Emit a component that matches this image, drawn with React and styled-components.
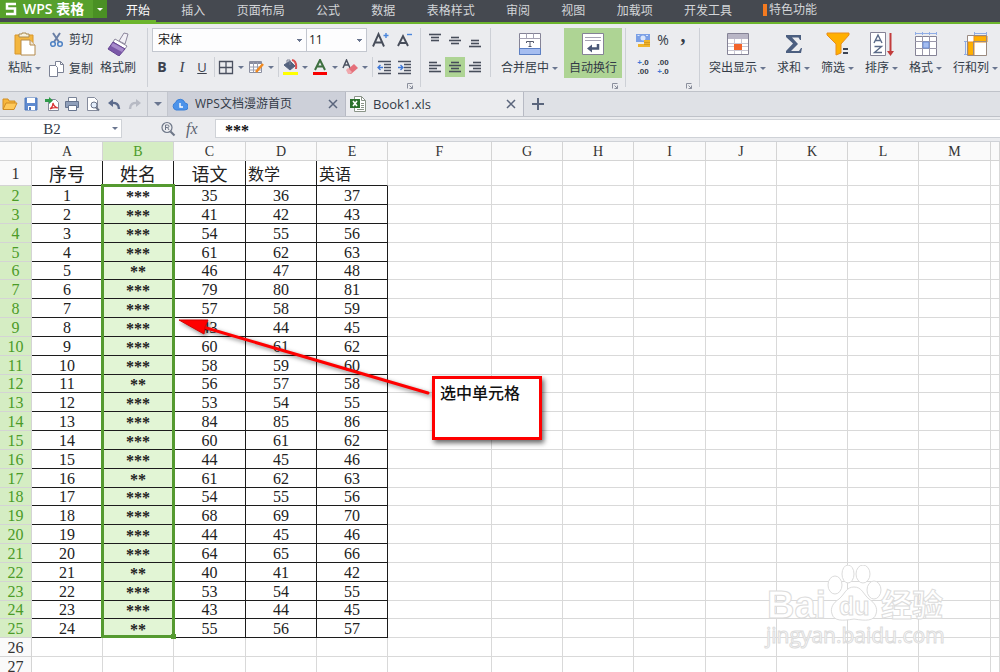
import React from "react";
import styled, { createGlobalStyle } from "styled-components";

const ui = `"Open Sans", "Noto Sans CJK SC", sans-serif`;
const song = `"Liberation Serif", "Noto Sans CJK SC", serif`;

const menus = ["插入", "页面布局", "公式", "数据", "表格样式", "审阅", "视图", "加载项", "开发工具"];

// the last column takes whatever width is left
const columns = [
  ["A", 71], ["B", 71], ["C", 72], ["D", 71], ["E", 71], ["F", 104], ["G", 71],
  ["H", 71], ["I", 72], ["J", 71], ["K", 71], ["L", 71], ["M", 72], ["", null],
];

const heads = ["序号", "姓名", "语文", "数学", "英语"];
const chinese = [35, 41, 54, 61, 46, 79, 57, 43, 60, 58, 56, 53, 84, 60, 44, 61, 54, 68, 44, 64, 40, 53, 43, 55];
const shortNames = [5, 11, 16, 21, 24];

const rows = chinese.map((score, i) => [
  i + 1,
  shortNames.includes(i + 1) ? "**" : "***",
  score,
  score + 1,
  score + 2,
]);
const blankRows = [26, 27];

/* ---------- icons ---------- */

const Svg = ({ w = 16, h = 16, children }) => (
  <svg width={w} height={h} viewBox={`0 0 ${w} ${h}`} fill="none" aria-hidden="true">
    {children}
  </svg>
);

const PasteIcon = () => (
  <Svg w={24} h={24}>
    <path d="M2 3h18v19H2z" fill="#f3b63f" stroke="#d8962a" />
    <path d="M6 5V2h3V1h4v1h3v3z" fill="#f6f0dc" stroke="#a98b52" />
    <path d="M8 8h9l5 5v10H8z" fill="#fff" stroke="#b48a4c" />
    <path d="M17 8v5h5" fill="#efe6d4" stroke="#b48a4c" />
  </Svg>
);
const CutIcon = () => (
  <Svg>
    <path d="M4 1l6 9M11 1L5 10" stroke="#6a7fa5" strokeWidth="2" />
    <circle cx="4" cy="12" r="2.3" stroke="#4e82c4" strokeWidth="1.5" />
    <circle cx="11" cy="12" r="2.3" stroke="#4e82c4" strokeWidth="1.5" />
  </Svg>
);
const CopyIcon = () => (
  <Svg>
    <path d="M6.5 .5h5l3 3v8h-8z" fill="#fff" stroke="#7c8295" />
    <path d="M11.5 .5v3h3" stroke="#7c8295" />
    <path d="M.5 4.5h6l2 2v9h-8z" fill="#fff" stroke="#7c8295" />
  </Svg>
);
const BrushIcon = () => (
  <Svg w={24} h={24}>
    <path d="M13 9l5-8 4 1-3 10z" fill="#f2f0f6" stroke="#8c869c" />
    <path d="M9 7l12 7-2 3L7 10z" fill="#fff" stroke="#8c869c" />
    <path d="M7 10l12 7-6 7-11-7z" fill="#7b58a8" stroke="#674694" />
    <path d="M7 11l11 6-2 3-11-6z" fill="#a78bcb" />
  </Svg>
);
const MergeIcon = () => (
  <Svg w={24} h={24}>
    <path d="M1.5 1.5h21v21h-21z" fill="#fff" stroke="#858396" />
    <path d="M1.5 6.500h21M8.5 1.5v5M15.5 1.5v5" stroke="#a5a3b3" />
    <path d="M2 16h20v6H2z" fill="#a5bdf0" />
    <path d="M1.5 16.5h21v6h-21z" stroke="#5b7fc4" />
    <path d="M8.5 11V9.5h7V11M12 9.5v5M10.5 14.5h3" stroke="#555b6c" />
  </Svg>
);
const WrapIcon = () => (
  <Svg w={24} h={24}>
    <path d="M1.5 1.5h21v21h-21z" fill="#fff" stroke="#858396" />
    <path d="M4 5.5h16M4 8.5h16" stroke="#a5a3b3" />
    <path d="M17 12v4.500H9" stroke="#4a5776" strokeWidth="2.500" />
    <path d="M6 16.500l5-4v8z" fill="#4a5776" />
  </Svg>
);
const HighlightIcon = () => (
  <Svg w={24} h={24}>
    <path d="M1.5 1.5h21v21h-21z" fill="#fff" stroke="#858396" />
    <path d="M2 2h20v5H2z" fill="#b9b6c6" />
    <path d="M2 11.5h20M2 14.5h20M2 18.5h20M8.5 7v15M15.5 7v15" stroke="#c9c7d3" />
    <path d="M8 12h8v6H8z" fill="#f2642a" />
  </Svg>
);
const SumIcon = () => (
  <Svg w={24} h={24}>
    <path d="M4 3h15v5h-1l-1.500-2.500H10l6 6.500-7 7h8l2-3h1l-1 5H4v-2l7-7.500L4 5z" fill="#4c5f80" />
  </Svg>
);
const FilterIcon = () => (
  <Svg w={24} h={24}>
    <path d="M1 1h22v2l-8 9v9l-5 2V12L1 3z" fill="#ffb000" stroke="#e88d1c" />
    <path d="M17 17h5M17 21h5" stroke="#3d4454" strokeWidth="2" />
  </Svg>
);
const SortIcon = () => (
  <Svg w={24} h={24}>
    <path d="M.5 .5h15v23H.5z" fill="#fff" stroke="#858396" />
    <path d="M4 11l4-8 4 8M5.500 8.500h5M4.500 14.500h7l-7 6h7.500" stroke="#5a6a88" strokeWidth="1.400" />
    <path d="M20.500 1v20" stroke="#c23c3c" strokeWidth="2" />
    <path d="M17 19h7l-3.500 5z" fill="#c23c3c" />
  </Svg>
);
const FormatIcon = () => (
  <Svg w={24} h={24}>
    <path d="M1.5 4.5h21v19h-21z" fill="#fff" stroke="#858396" />
    <path d="M1 9.5h22M1 16.5h22M8.5 4v19M15.5 4v19" stroke="#9a98aa" />
    <path d="M9 10h6v6H9z" fill="#a5bdf0" stroke="#6b8dd6" />
    <path d="M1 1.5h22M1.5 0v3M8.5 0v3M15.5 0v3M22.5 0v3" stroke="#8fade6" />
  </Svg>
);
const RowColIcon = () => (
  <Svg w={24} h={24}>
    <path d="M4 4h19v19H4z" fill="#fff" />
    <path d="M4 10h6v13H4zM10 4h13v6H10z" fill="#ffb000" stroke="#e88d1c" />
    <path d="M3.5 3.5h19v20h-19zM9.5 9.5v14M9.5 9.5h13" stroke="#9a8a80" />
    <path d="M10 1.5h13M10.5 0v3M22.5 0v3M1.5 10v13M0 9.5h3M0 22.5h3" stroke="#8fade6" />
  </Svg>
);
const BordersIcon = () => (
  <Svg>
    <path d="M1.5 2.5h13v12h-13zM8 2.5v12M1.5 8.5h13" stroke="#4b5160" strokeWidth="1.300" />
  </Svg>
);
const DrawTableIcon = () => (
  <Svg>
    <path d="M1.5 2.5h12v11h-12z" fill="#fff" stroke="#8a8ea0" />
    <path d="M1 3h13v2H1z" fill="#8a8ea0" />
    <path d="M1.5 8h12M1.5 11h12M5.5 3v10M9.5 3v10" stroke="#9a9eb0" />
    <path d="M15 5l-7 8" stroke="#f28a1e" strokeWidth="2.500" />
  </Svg>
);
const FillIcon = () => (
  <Svg>
    <path d="M2 6l6-4 5 5-5 4z" fill="#54627e" stroke="#54627e" />
    <path d="M5 4V1h3v5" stroke="#7c8295" />
    <path d="M10 1q5 1 4 9" stroke="#dc5050" strokeWidth="2" />
    <path d="M1 13h15v3H1z" fill="#ffff00" />
  </Svg>
);
const FontColorIcon = () => (
  <Svg>
    <path d="M3 11L8 1l5 10M5 7.500h6" stroke="#3e7040" strokeWidth="2" />
    <path d="M1 13h14v3H1z" fill="#f80000" />
  </Svg>
);
const EraserIcon = () => (
  <Svg>
    <path d="M1 9l3.500-8L8 9M2.500 6h4" stroke="#4b5160" strokeWidth="1.500" />
    <path d="M5 11l7-6 4 4-7 6H7z" fill="#e5707a" />
    <path d="M4 11l2-2 4 4-2 2H6z" fill="#f0a9ae" />
  </Svg>
);
const IndentIcon = ({ out }) => (
  <Svg>
    <path d="M2 2.500h13M8 5.500h7M8 8.500h7M8 11.500h7M2 14.500h13" stroke="#4b5160" strokeWidth="1.400" />
    <path
      d={out ? "M2 8.500h5M4.500 6L2 8.500 4.500 11" : "M2 8.500h5M4.500 6L7 8.500 4.500 11"}
      stroke="#3f78d8"
      strokeWidth="1.300"
    />
  </Svg>
);
const BiggerIcon = ({ minus }) => (
  <Svg w={18} h={18}>
    <path
      d={minus ? "M2 15L7 5l5 10M4 12h6" : "M1 15.500L6.500 3l5.500 12.500M3 11.500h7"}
      stroke="#474d5a"
      strokeWidth="1.900"
    />
    <path d={minus ? "M11 3.500h5" : "M11.500 4.500h5M14 2v5"} stroke="#4a86dc" strokeWidth="1.400" />
  </Svg>
);
const LinesIcon = ({ y = 0, lines }) => (
  <Svg>
    {lines.map(([x, w], i) => (
      <path key={i} d={`M${x} ${y + i * 3 + 0.5}h${w}`} stroke="#474d5a" strokeWidth="1.600" />
    ))}
  </Svg>
);
const MoneyIcon = () => (
  <Svg>
    <path d="M1 2h14v8H1z" fill="#7ba0e6" />
    <circle cx="8" cy="6" r="2.500" fill="#d9e5fb" />
    <path d="M2.500 3.500h2M11 3.500h2" stroke="#d9e5fb" />
    <path d="M9 8h6v7H9zM3 12h6v3H3z" fill="#f0b52c" />
    <path d="M9 10.500h6M9 12.500h6" stroke="#d89a1c" />
  </Svg>
);

const FolderIcon = () => (
  <Svg>
    <path d="M1 13V3h5l1 2h6v3" fill="#f7b63c" stroke="#d18d22" />
    <path d="M1 13.500L4 7h11l-3 6.500z" fill="#ffc95a" stroke="#d18d22" />
  </Svg>
);
const SaveIcon = () => (
  <Svg>
    <path d="M2 2h12v12H2z" fill="#5f8bd0" stroke="#4f78bc" />
    <path d="M4 2h8v5H4zM5 10h7v4H5z" fill="#fff" />
    <path d="M6 11h2v3H6z" fill="#4f78bc" />
  </Svg>
);
const PdfIcon = () => (
  <Svg>
    <path d="M4.500 3.500h7l3 3v8h-10z" fill="#fff" stroke="#858b9c" />
    <path d="M6 13q3-2 3-6 1 4 5 5-4-1-8 1z" stroke="#d93636" strokeWidth="1.200" />
    <path d="M1 3h4V1l4 3.500L5 8V6H1z" fill="#2f9a4a" />
  </Svg>
);
const PrintIcon = () => (
  <Svg>
    <path d="M4.500 1.500h8v4h-8z" fill="#fff" stroke="#7a8498" />
    <path d="M1.500 5.500h13v6h-13z" fill="#8f9fba" stroke="#66748e" />
    <path d="M4.500 9.500h8v5h-8z" fill="#fff" stroke="#66748e" />
  </Svg>
);
const PreviewIcon = () => (
  <Svg>
    <path d="M2.500 1.500h7l3 3v10h-10z" fill="#fff" stroke="#858b9c" />
    <circle cx="9" cy="9" r="3" fill="#e4eefb" stroke="#6b7488" />
    <path d="M11 11.500l3 3" stroke="#6b7488" strokeWidth="2" />
  </Svg>
);
const UndoIcon = ({ redo }) => (
  <Svg>
    <g transform={redo ? "translate(16 0) scale(-1 1)" : undefined}>
      <path d="M5 7q8-1 8 6" stroke={redo ? "#b7bac4" : "#5c6b8c"} strokeWidth="2.500" />
      <path d="M2 7l5-4v8z" fill={redo ? "#b7bac4" : "#5c6b8c"} />
    </g>
  </Svg>
);
const CloudIcon = () => (
  <Svg>
    <path d="M4 14a4 4 0 0 1-.5-7.500 5 5 0 0 1 9.500.5 3.500 3.500 0 0 1-.5 7z" fill="#4c93ea" stroke="#3a7fd8" />
    <path d="M8 7v4h3" stroke="#fff" strokeWidth="1.400" />
  </Svg>
);
const XlsIcon = () => (
  <Svg>
    <path d="M4.500 .5h7l4 4v11h-11z" fill="#fff" stroke="#8a9488" />
    <path d="M11.500 .5v4h4M11 7.500h3M11 9.500h3M11 11.500h3M7 13.500h7" stroke="#8a9488" />
    <path d="M0 3h10v9H0z" fill="#2c702c" />
    <path d="M3 5l4 5M7 5l-4 5" stroke="#fff" strokeWidth="1.600" />
  </Svg>
);
const CloseIcon = () => (
  <Svg w={10} h={10}>
    <path d="M1 1l8 8M9 1L1 9" stroke="#5a657c" strokeWidth="1.500" />
  </Svg>
);
const PlusIcon = () => (
  <Svg w={12} h={12}>
    <path d="M6 0v12M0 6h12" stroke="#5a657c" strokeWidth="2" />
  </Svg>
);
const LookupIcon = () => (
  <Svg>
    <circle cx="7" cy="6.500" r="5" stroke="#6e7788" strokeWidth="1.200" />
    <path d="M5.500 9V4h2q1.500 0 1.500 1.300T7.500 6.500h-2M7.500 6.500L9 9" stroke="#6e7788" />
    <path d="M10.500 10.500l4 4" stroke="#6e7788" strokeWidth="2.200" />
  </Svg>
);
const CornerIcon = () => (
  <Svg w={6} h={6}>
    <path d="M.5 5.500v-5h5M5.500 2.500v3h-3M2.500 2.500l3 3" stroke="#8a8f9c" />
  </Svg>
);
const LogoIcon = () => (
  <Svg w={12} h={14}>
    <path d="M11 2H2v4.500h8V12H1" stroke="#fff" strokeWidth="2.500" />
  </Svg>
);

/* ---------- page ---------- */

const Big = ({ icon, label, caret = true, active }) => (
  <BigButton $active={active}>
    {icon}
    <BigLabel>
      {label}
      {caret && <Caret />}
    </BigLabel>
  </BigButton>
);

const App = () => {
  return (
    <Window>
      <GlobalStyle />

      <MenuBar>
        <AppButton>
          <LogoIcon />
          <AppName>WPS 表格</AppName>
          <AppDrop>
            <Caret $light />
          </AppDrop>
        </AppButton>
        <Menus>
          <MenuItem $active>开始</MenuItem>
          {menus.map((m) => (
            <MenuItem key={m}>{m}</MenuItem>
          ))}
        </Menus>
        <Special>特色功能</Special>
      </MenuBar>

      <Ribbon>
        <Clipboard>
          <Big icon={<PasteIcon />} label="粘贴" />
          <SmallColumn>
            <SmallButton><CutIcon />剪切</SmallButton>
            <SmallButton><CopyIcon />复制</SmallButton>
          </SmallColumn>
          <Big icon={<BrushIcon />} label="格式刷" caret={false} />
        </Clipboard>
        <Divider />

        <Group $width={272} $pad={4}>
          <Line>
            <FontSelect aria-label="字体"><option>宋体</option></FontSelect>
            <SizeSelect aria-label="字号"><option>11</option></SizeSelect>
            <Grow aria-label="增大字号"><BiggerIcon /></Grow>
            <Grow aria-label="减小字号"><BiggerIcon minus /></Grow>
          </Line>
          <Line $tools>
            <Tool><Bold>B</Bold></Tool>
            <Tool><Italic>I</Italic></Tool>
            <Tool><Under>U</Under></Tool>
            <ToolDivider />
            <Tool><BordersIcon /></Tool>
            <CaretTool aria-label="边框"><Caret /></CaretTool>
            <Tool><DrawTableIcon /></Tool>
            <CaretTool aria-label="绘制"><Caret /></CaretTool>
            <ToolDivider />
            <Tool><FillIcon /></Tool>
            <CaretTool aria-label="填充"><Caret /></CaretTool>
            <Tool><FontColorIcon /></Tool>
            <CaretTool aria-label="颜色"><Caret /></CaretTool>
            <Tool><EraserIcon /></Tool>
            <CaretTool aria-label="清除"><Caret /></CaretTool>
            <ToolDivider />
            <Tool><IndentIcon out /></Tool>
            <Tool><IndentIcon /></Tool>
          </Line>
          <Corner><CornerIcon /></Corner>
        </Group>
        <Divider />

        <Group $width={69} $pad={4}>
          <Line>
            <Tool><LinesIcon y={2} lines={[[2, 12], [4, 8], [4, 8]]} /></Tool>
            <Tool><LinesIcon y={5} lines={[[4, 8], [2, 12], [4, 8]]} /></Tool>
            <Tool><LinesIcon y={8} lines={[[4, 8], [4, 8], [2, 12]]} /></Tool>
          </Line>
          <Line $tools>
            <Tool><LinesIcon y={3} lines={[[2, 8], [2, 12], [2, 8], [2, 12]]} /></Tool>
            <Tool $active><LinesIcon y={3} lines={[[4, 8], [2, 12], [4, 8], [2, 12]]} /></Tool>
            <Tool><LinesIcon y={3} lines={[[6, 8], [2, 12], [6, 8], [2, 12]]} /></Tool>
          </Line>
        </Group>
        <Divider $short />

        <Group $width={134} $pad={5}>
          <Bigs>
            <Big icon={<MergeIcon />} label="合并居中" />
            <Big icon={<WrapIcon />} label="自动换行" caret={false} active />
          </Bigs>
          <Corner><CornerIcon /></Corner>
        </Group>
        <Divider />

        <Group $width={73} $pad={7}>
          <Line>
            <Tool><MoneyIcon /></Tool>
            <Tool><Percent>%</Percent></Tool>
            <Tool><Comma>,</Comma></Tool>
          </Line>
          <Line $tools>
            <Tool><Decimals><span><b>+</b>.0</span><span>.00</span></Decimals></Tool>
            <Tool><Decimals><span>.00</span><span><b>+</b>.0</span></Decimals></Tool>
          </Line>
          <Corner><CornerIcon /></Corner>
        </Group>
        <Divider />

        <Group $pad={4}>
          <Bigs>
            <Big icon={<HighlightIcon />} label="突出显示" />
            <Big icon={<SumIcon />} label="求和" />
            <Big icon={<FilterIcon />} label="筛选" />
            <Big icon={<SortIcon />} label="排序" />
            <Big icon={<FormatIcon />} label="格式" />
            <Big icon={<RowColIcon />} label="行和列" />
          </Bigs>
        </Group>
      </Ribbon>

      <TabStrip>
        <Quick>
          <QuickButton aria-label="打开"><FolderIcon /></QuickButton>
          <QuickButton aria-label="保存"><SaveIcon /></QuickButton>
          <QuickButton aria-label="输出为PDF"><PdfIcon /></QuickButton>
          <QuickButton aria-label="打印"><PrintIcon /></QuickButton>
          <QuickButton aria-label="打印预览"><PreviewIcon /></QuickButton>
          <QuickButton aria-label="撤销"><UndoIcon /></QuickButton>
          <QuickButton aria-label="恢复"><UndoIcon redo /></QuickButton>
        </Quick>
        <QuickMore aria-label="更多"><Caret $wide /></QuickMore>
        <DocTab>
          <CloudIcon />
          <TabName>WPS文档漫游首页</TabName>
          <CloseButton aria-label="关闭"><CloseIcon /></CloseButton>
        </DocTab>
        <DocTab $active>
          <XlsIcon />
          <TabName $large>Book1.xls</TabName>
          <CloseButton aria-label="关闭"><CloseIcon /></CloseButton>
        </DocTab>
        <NewTab aria-label="新建"><PlusIcon /></NewTab>
      </TabStrip>

      <FormulaBar>
        <NameBox>
          <NameInput aria-label="名称框" defaultValue="B2" />
          <Caret />
        </NameBox>
        <Lookup>
          <LookupIcon />
          <Fx>fx</Fx>
        </Lookup>
        <FormulaInput aria-label="编辑栏" defaultValue="***" />
      </FormulaBar>

      <SheetArea>
        <Sheet>
          <colgroup>
            <Col $width={32} />
            {columns.map(([name, width]) => (
              <Col key={name} $width={width} />
            ))}
          </colgroup>
          <thead>
            <tr>
              <ColHead />
              {columns.map(([name]) => (
                <ColHead key={name} scope="col" $on={name === "B"}>{name}</ColHead>
              ))}
            </tr>
          </thead>
          <tbody>
            <Row $first>
              <RowHead scope="row">1</RowHead>
              {heads.map((h, i) => (
                <TitleCell key={h} $left={i > 2} $open={i === 4}>{h}</TitleCell>
              ))}
              {columns.slice(5).map(([name]) => <Cell key={name} />)}
            </Row>
            {rows.map((row, r) => (
              <Row key={r}>
                <RowHead scope="row" $on>{r + 2}</RowHead>
                {row.map((value, c) =>
                  c === 1 ? (
                    <StarCell key={c} $picked={r > 0}>{value}</StarCell>
                  ) : (
                    <Cell key={c} $boxed>{value}</Cell>
                  )
                )}
                {columns.slice(5).map(([name]) => <Cell key={name} />)}
              </Row>
            ))}
            {blankRows.map((n) => (
              <Row key={n}>
                <RowHead scope="row">{n}</RowHead>
                {columns.map(([name]) => <Cell key={name} />)}
              </Row>
            ))}
          </tbody>
        </Sheet>

        <Selection />
        <Arrow width="270" height="100" viewBox="0 0 270 100" aria-hidden="true">
          <path d="M28 15L253 81" stroke="#f00" strokeWidth="3" strokeLinecap="round" />
          <path d="M4 8l29 0-3 7-1 7z" fill="#f00" stroke="#d80000" />
        </Arrow>
        <Callout>选中单元格</Callout>
        <Watermark width="190" height="90" viewBox="0 0 190 90" role="img" aria-label="Baidu 经验">
          <g fill="#fff" stroke="#dcdcdc">
            <text x="4" y="53" fontSize="38" fontWeight="700" fontFamily="Liberation Sans">Bai</text>
            <ellipse cx="72" cy="20" rx="7" ry="9" />
            <ellipse cx="85" cy="9" rx="6" ry="9" />
            <ellipse cx="100" cy="9" rx="7" ry="9" />
            <ellipse cx="111" cy="25" rx="7" ry="9" />
            <path d="M91 22c8 0 9 7 15 12 6 4 9 9 7 15-2 7-10 7-22 5-12 2-20 2-22-5-2-6 1-11 7-15 6-5 7-12 15-12z" />
            <text x="76" y="50" fontSize="25" fontWeight="700" fontFamily="Liberation Sans">du</text>
            <text x="118" y="51" fontSize="31" fontWeight="700" fontFamily="Noto Sans CJK SC">经验</text>
            <text x="3" y="78" fontSize="21" fontFamily="Open Sans">jingyan.baidu.com</text>
          </g>
        </Watermark>
      </SheetArea>
    </Window>
  );
};

export default App;

const GlobalStyle = createGlobalStyle`
  * { box-sizing: border-box; }
  body { margin: 0; overflow: hidden; }
  button, input, select {
    margin: 0;
    padding: 0;
    border: 0;
    background: none;
    color: inherit;
    font: inherit;
  }
  svg { flex: none; display: block; }
`;

const Window = styled.div`
  display: flex;
  flex-direction: column;
  height: 100vh;
  overflow: hidden;
  background: #fff;
  color: #333b47;
  font-family: ${ui};
  font-size: 12px;
  line-height: 16px;
  white-space: nowrap;
`;

const Caret = styled.span`
  flex: none;
  width: 0;
  height: 0;
  border: solid transparent;
  border-width: ${(p) => (p.$wide ? "4px 4px 0" : "3px 3px 0")};
  border-top-color: ${(p) => (p.$light ? "#fff" : "#6a7690")};
`;

/* menu bar */

const MenuBar = styled.header`
  display: flex;
  flex: none;
  height: 24px;
  background: #454950;
  border-bottom: 2px solid #6cb52d;
`;

const AppButton = styled.button`
  display: flex;
  align-items: center;
  width: 107px;
  height: 18px;
  padding-left: 5px;
  gap: 6px;
  background: #57a02c;
  color: #fff;
`;

const AppName = styled.span`
  flex: 1;
  font-size: 14px;
  font-weight: 600;
  text-align: left;
  line-height: 16px;
`;

const AppDrop = styled.span`
  display: flex;
  align-items: center;
  justify-content: center;
  width: 14px;
  height: 18px;
  background: #4a9024;
`;

const Menus = styled.nav`
  display: flex;
  justify-content: space-between;
  width: 618px;
  margin-left: 13px;
`;

const MenuItem = styled.button`
  height: 22px;
  padding: 0 6px;
  color: ${(p) => (p.$active ? "#fff" : "#d3d5d8")};
  box-shadow: ${(p) => (p.$active ? "inset 0 -2px #6cb52d" : "none")};
`;

const Special = styled.button`
  height: 12px;
  margin: 4px 0 0 25px;
  padding-left: 2px;
  border-left: 4px solid #f47a20;
  color: #d3d5d8;
  line-height: 12px;
`;

/* ribbon */

const Ribbon = styled.section`
  display: flex;
  flex: none;
  height: 68px;
  padding-top: 4px;
  background: #ebecef;
  border-bottom: 1px solid #bfc2c9;
`;

const Clipboard = styled.div`
  display: flex;
  flex: none;
  width: 147px;
  padding-left: 3px;
`;

const Divider = styled.span`
  flex: none;
  width: 1px;
  height: ${(p) => (p.$short ? 49 : 59)}px;
  background: #cdd0d6;
`;

const Group = styled.div`
  display: flex;
  flex: none;
  flex-direction: column;
  width: ${(p) => (p.$width ? `${p.$width}px` : "auto")};
  padding-left: ${(p) => p.$pad}px;
`;

const Line = styled.div`
  display: flex;
  align-items: center;
  height: ${(p) => (p.$tools ? 20 : 24)}px;
  margin-top: ${(p) => (p.$tools ? 5 : 0)}px;
`;

const Corner = styled.div`
  display: flex;
  justify-content: flex-end;
  margin-top: auto;
  padding: 0 7px 2px 0;
`;

const Bigs = styled.div`
  display: flex;
  gap: 1px;
`;

const BigButton = styled.button`
  display: flex;
  flex-direction: column;
  align-items: center;
  height: 50px;
  padding: 4px 5px 0;
  gap: 4px;
  background: ${(p) => (p.$active ? "#aed494" : "transparent")};
`;

const BigLabel = styled.span`
  display: flex;
  align-items: center;
  gap: 3px;
`;

const SmallColumn = styled.div`
  display: flex;
  flex-direction: column;
  gap: 5px;
  width: 49px;
  padding-left: 3px;
`;

const SmallButton = styled.button`
  display: flex;
  align-items: center;
  gap: 4px;
  height: 24px;
`;

const FontSelect = styled.select`
  appearance: none;
  width: 155px;
  height: 24px;
  padding-left: 5px;
  border: 1px solid #c3c7cf;
  background: linear-gradient(#6a7690, #6a7690) no-repeat right 4px top 10px / 5px 1px,
    linear-gradient(#6a7690, #6a7690) no-repeat right 5px top 11px / 3px 1px,
    linear-gradient(#6a7690, #6a7690) no-repeat right 6px top 12px / 1px 1px, #fdfdfe;
  color: #222;
`;

const SizeSelect = styled(FontSelect)`
  width: 61px;
  margin-left: -1px;
  padding-left: 2px;
`;

const Grow = styled.button`
  width: 24px;
  padding-left: 5px;
`;

const Tool = styled.button`
  display: flex;
  flex: none;
  align-items: center;
  justify-content: center;
  width: 20px;
  height: 20px;
  background: ${(p) => (p.$active ? "#aed494" : "transparent")};
`;

const CaretTool = styled(Tool)`
  width: 10px;
`;

const ToolDivider = styled.span`
  width: 1px;
  height: 20px;
  margin: 0 1px 0 2px;
  background: #cdd0d6;
`;

const Bold = styled.b`
  font-size: 14px;
  color: #3c424e;
`;

const Italic = styled.i`
  font: italic 15px "Liberation Serif", serif;
  color: #3c424e;
`;

const Under = styled.u`
  font-size: 13px;
  color: #3c424e;
`;

const Percent = styled.span`
  font-size: 14px;
`;

const Comma = styled.b`
  font: bold 20px "Liberation Serif", serif;
  line-height: 8px;
  padding-bottom: 10px;
`;

const Decimals = styled.span`
  display: flex;
  flex-direction: column;
  align-items: flex-end;
  font-family: "Liberation Sans", sans-serif;
  font-size: 8px;
  font-weight: 700;
  line-height: 9px;

  b { color: #3f78d8; }
`;

/* document tabs */

const TabStrip = styled.div`
  display: flex;
  flex: none;
  height: 25px;
  background: #dfe1e6;
  border-bottom: 1px solid #bfc2c9;
`;

const Quick = styled.div`
  display: flex;
  align-items: center;
  justify-content: space-between;
  width: 147px;
  padding: 0 4px 0 2px;
`;

const QuickButton = styled.button`
  width: 16px;
  height: 16px;
`;

const QuickMore = styled.button`
  display: flex;
  align-items: center;
  justify-content: center;
  width: 21px;
  border: solid #c3c6ce;
  border-width: 0 1px;
`;

const DocTab = styled.div`
  display: flex;
  align-items: center;
  width: 178px;
  padding: 0 7px 0 4px;
  gap: 7px;
  border-right: 1px solid #b7bac4;
  background: ${(p) => (p.$active ? "#ebecef" : "#cdd0d9")};
`;

const TabName = styled.span`
  flex: 1;
  font-size: ${(p) => (p.$large ? 13 : 12)}px;
`;

const CloseButton = styled.button`
  width: 10px;
  height: 10px;
`;

const NewTab = styled.button`
  padding: 0 8px;
`;

/* formula bar */

const FormulaBar = styled.div`
  display: flex;
  flex: none;
  height: 25px;
  padding: 2px 0 3px;
  background: #ebecef;
  border-bottom: 1px solid #cfd2d7;
`;

const NameBox = styled.label`
  display: flex;
  align-items: center;
  width: 122px;
  padding-right: 3px;
  border: 1px solid #cfd2d7;
  border-left: 0;
  background: #fff;
`;

const NameInput = styled.input`
  flex: 1;
  min-width: 0;
  padding: 2px 8px 0 0;
  font: 15px ${song};
  text-align: center;
`;

const Lookup = styled.div`
  display: flex;
  align-items: center;
  gap: 10px;
  width: 93px;
  padding-left: 38px;
`;

const Fx = styled.i`
  font: italic 16px "Liberation Serif", serif;
  color: #5a6270;
`;

const FormulaInput = styled.input`
  flex: 1;
  min-width: 0;
  padding: 5px 0 0 9px;
  border: 1px solid #cfd2d7;
  border-right: 0;
  background: #fff;
  color: #111;
  font: bold 16px "Liberation Serif", serif;
`;

/* sheet */

const SheetArea = styled.main`
  position: relative;
  flex: 1;
  min-height: 0;
  overflow: hidden;
`;

const Sheet = styled.table`
  width: 100%;
  table-layout: fixed;
  border-spacing: 0;
  color: #222;
  font-family: ${song};
  font-size: 16px;
  line-height: 16px;
`;

const Col = styled.col`
  width: ${(p) => (p.$width ? `${p.$width}px` : "auto")};
`;

const ColHead = styled.th`
  height: 19px;
  padding: 2px 0 0;
  border: solid #d4d4d4;
  border-width: 0 1px 1px 0;
  background: ${(p) => (p.$on ? "#d5edc3" : "#fafafa")};
  color: ${(p) => (p.$on ? "#4b9b28" : "#333")};
  font-size: 14px;
  font-weight: 400;
`;

const Row = styled.tr`
  height: ${(p) => (p.$first ? 25 : 19)}px;

  &:nth-child(6n) { height: 18px; }
`;

const RowHead = styled.th`
  padding: 1px 0 0;
  border: solid #d4d4d4;
  border-width: 0 1px 1px 0;
  background: ${(p) => (p.$on ? "#d5edc3" : "#fafafa")};
  color: ${(p) => (p.$on ? "#4b9b28" : "#333")};
  font-weight: 400;
`;

const Cell = styled.td`
  padding: 1px 0 0;
  border: solid ${(p) => (p.$boxed ? "#1c1c1c" : "#d9d9d9")};
  border-width: 0 1px 1px 0;
  text-align: center;
`;

const TitleCell = styled(Cell)`
  padding: 3px 0 0 ${(p) => (p.$left ? 2 : 0)}px;
  border-color: #1c1c1c;
  border-right-color: ${(p) => (p.$open ? "#d9d9d9" : "#1c1c1c")};
  font-size: ${(p) => (p.$left ? 16 : 18)}px;
  text-align: ${(p) => (p.$left ? "left" : "center")};
`;

const StarCell = styled(Cell)`
  padding-top: 2px;
  border-color: #1c1c1c;
  background: ${(p) => (p.$picked ? "#e2f5d5" : "#fff")};
  font-weight: 700;
  line-height: 11px;
`;

const Selection = styled.div`
  position: absolute;
  left: 101px;
  top: 42px;
  width: 74px;
  height: 454px;
  border: 3px solid #559a30;

  &::after {
    content: "";
    position: absolute;
    right: -4px;
    bottom: -4px;
    width: 5px;
    height: 5px;
    background: #559a30;
  }
`;

const Arrow = styled.svg`
  position: absolute;
  left: 175px;
  top: 170px;
  filter: drop-shadow(2px 2px 2px rgba(0, 0, 0, 0.5));
`;

const Callout = styled.div`
  position: absolute;
  left: 432px;
  top: 234px;
  width: 110px;
  height: 64px;
  padding: 5px;
  border: 3px solid #f00;
  background: #fff;
  box-shadow: 2px 3px 5px rgba(0, 0, 0, 0.6);
  color: #111;
  font-family: "Noto Sans CJK SC", sans-serif;
  font-size: 16px;
  font-weight: 500;
`;

const Watermark = styled.svg`
  position: absolute;
  right: 47px;
  bottom: 17px;
`;
